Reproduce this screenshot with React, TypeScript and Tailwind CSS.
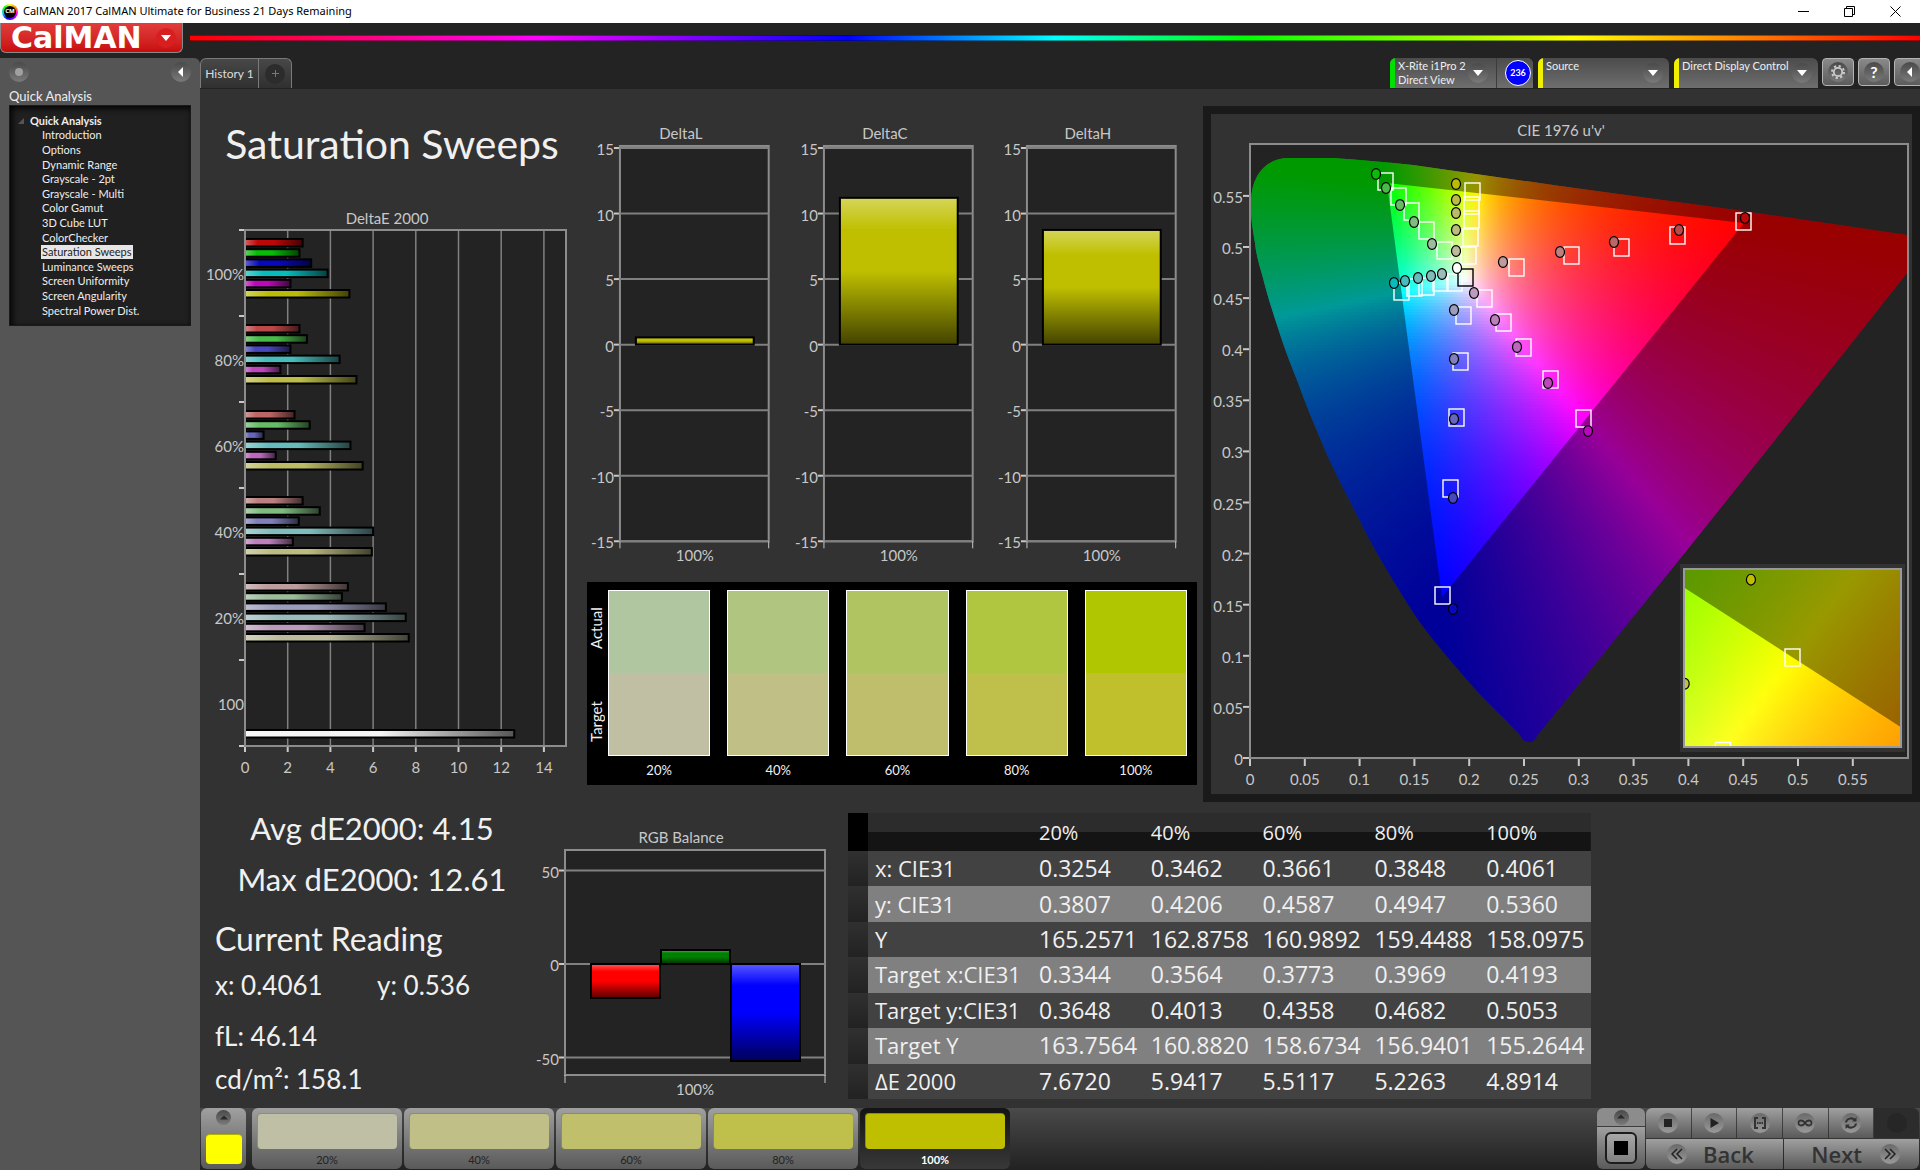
import type { ReactNode } from 'react'

const HUES = ['R', 'G', 'B', 'C', 'M', 'Y'] as const
type Hue = (typeof HUES)[number]

const HUE_MASK: Record<Hue, [number, number, number]> = {
    R: [1, 0, 0], G: [0, 1, 0], B: [0, 0, 1],
    C: [0, 1, 1], M: [1, 0, 1], Y: [1, 1, 0],
}

// channel value of the "off" primaries at 100, 80, 60, 40 and 20% saturation
const LOW = [8, 72, 102, 128, 156]
const HIGH = 188

function hueColor(hue: Hue, level: number) {
    const [r, g, b] = HUE_MASK[hue].map(on => (on ? HIGH : LOW[level]))
    return `rgb(${r},${g},${b})`
}

const TREE = [
    'Introduction', 'Options', 'Dynamic Range', 'Grayscale - 2pt', 'Grayscale - Multi',
    'Color Gamut', '3D Cube LUT', 'ColorChecker', 'Saturation Sweeps', 'Luminance Sweeps',
    'Screen Uniformity', 'Screen Angularity', 'Spectral Power Dist.',
]

const DELTA_E = [
    { label: '100%', values: [2.7, 2.55, 3.1, 3.87, 2.13, 4.89] },
    { label: '80%', values: [2.55, 2.9, 2.13, 4.43, 1.66, 5.22] },
    { label: '60%', values: [2.32, 3.03, 0.87, 4.94, 1.44, 5.51] },
    { label: '40%', values: [2.7, 3.5, 2.52, 6.0, 2.24, 5.94] },
    { label: '20%', values: [4.82, 4.54, 6.6, 7.53, 5.6, 7.67] },
    { label: '100', values: [] },
]

const SWATCHES = [
    { label: '20%', actual: '#afc6a0', target: '#c0bea3' },
    { label: '40%', actual: '#b0c580', target: '#c0bf86' },
    { label: '60%', actual: '#b0c562', target: '#bfbe6c' },
    { label: '80%', actual: '#b0c640', target: '#bfbf4b' },
    { label: '100%', actual: '#b0c600', target: '#c0c02c' },
]

const LEVELS = [
    { label: '20%', color: '#bfbfa5' },
    { label: '40%', color: '#bfbf87' },
    { label: '60%', color: '#bfbf6c' },
    { label: '80%', color: '#bfbf4b' },
    { label: '100%', color: '#bfbf00' },
]

const ROWS = [
    ['x: CIE31', '0.3254', '0.3462', '0.3661', '0.3848', '0.4061'],
    ['y: CIE31', '0.3807', '0.4206', '0.4587', '0.4947', '0.5360'],
    ['Y', '165.2571', '162.8758', '160.9892', '159.4488', '158.0975'],
    ['Target x:CIE31', '0.3344', '0.3564', '0.3773', '0.3969', '0.4193'],
    ['Target y:CIE31', '0.3648', '0.4013', '0.4358', '0.4682', '0.5053'],
    ['Target Y', '163.7564', '160.8820', '158.6734', '156.9401', '155.2644'],
    ['ΔE 2000', '7.6720', '5.9417', '5.5117', '5.2263', '4.8914'],
]

// plot positions, 100% saturation first
const TARGETS: Record<Hue, number[][]> = {
    G: [[174, 67], [187, 82], [200, 97], [215, 116], [233, 136]],
    Y: [[261, 77], [260, 91], [260, 105], [259, 123], [257, 141]],
    C: [[190, 177], [203, 173], [215, 172], [229, 168], [243, 168]],
    B: [[231, 481], [239, 374], [245, 303], [249, 247], [252, 201]],
    M: [[372, 304], [339, 265], [312, 233], [292, 208], [273, 184]],
    R: [[532, 107], [466, 121], [410, 133], [360, 141], [305, 153]],
}

const READINGS: Record<Hue, number[][]> = {
    G: [[165, 60], [175, 74], [189, 91], [203, 108], [221, 130]],
    Y: [[245, 70], [245, 86], [245, 99], [245, 116], [245, 137]],
    C: [[183, 169], [194, 167], [207, 164], [220, 162], [231, 160]],
    B: [[242, 495], [242, 384], [243, 305], [243, 245], [243, 196]],
    M: [[377, 317], [337, 269], [306, 233], [284, 206], [263, 179]],
    R: [[534, 104], [468, 116], [403, 128], [349, 138], [292, 148]],
}

/* ---------- colour maths ---------- */

// xy chromaticity to display RGB, brightest channel at full
function xyToRgb(x: number, y: number) {
    const yy = Math.max(y, 0.001)
    const X = x / yy
    const Z = (1 - x - yy) / yy
    const rgb = [
        3.2406 * X - 1.5372 - 0.4986 * Z,
        -0.9689 * X + 1.8758 + 0.0415 * Z,
        0.0557 * X - 0.204 + 1.057 * Z,
    ].map(c => Math.max(c, 0))
    const top = Math.max(...rgb, 0.0001)
    return `rgb(${rgb.map(c => Math.round((c / top) * 255)).join(',')})`
}

function uvToRgb(u: number, v: number) {
    const d = 6 * u - 16 * v + 12
    return xyToRgb((9 * u) / d, (4 * v) / d)
}

type FieldProps = {
    id: string
    x: number
    y: number
    width: number
    height: number
    color: (px: number, py: number) => string
}

// fills a box with thin strips, each one a horizontal gradient
function ColorField({ id, x, y, width, height, color }: FieldProps) {
    const strip = 3
    const steps = Math.ceil(width / 12)
    const rows = Array.from({ length: Math.ceil(height / strip) }, (_, i) => y + i * strip)
    return (
        <>
            {rows.map((top, i) => (
                <g key={top}>
                    <linearGradient id={`${id}${i}`} gradientUnits="userSpaceOnUse" x1={x} x2={x + width} y1={0} y2={0}>
                        {Array.from({ length: steps + 1 }, (_, s) => (
                            <stop key={s} offset={s / steps} stopColor={color(x + (width * s) / steps, top + strip / 2)} />
                        ))}
                    </linearGradient>
                    <rect x={x} y={top} width={width} height={strip} fill={`url(#${id}${i})`} shapeRendering="crispEdges" />
                </g>
            ))}
        </>
    )
}

/* ---------- charts ---------- */

const AXIS = '#8c8c8c'
const GRID = '#808080'
const TICK = '#c8c8c8'

function Label({ x, y, anchor = 'middle', children }: {
    x: number, y: number, anchor?: 'start' | 'middle' | 'end', children: ReactNode
}) {
    return (
        <text x={x} y={y} textAnchor={anchor} dominantBaseline="central" fontSize={15} fill="#c8c8c8">
            {children}
        </text>
    )
}

function ShadeDefs({ id }: { id: string }) {
    const stops = (
        <>
            <stop offset="0" stopColor="#fff" stopOpacity="0.35" />
            <stop offset="0.22" stopColor="#fff" stopOpacity="0" />
            <stop offset="0.5" stopColor="#000" stopOpacity="0" />
            <stop offset="1" stopColor="#000" stopOpacity="0.65" />
        </>
    )
    return (
        <defs>
            <linearGradient id={`${id}-h`}>{stops}</linearGradient>
            <linearGradient id={`${id}-v`} x1="0" y1="0" x2="0" y2="1">{stops}</linearGradient>
        </defs>
    )
}

function Bar({ x, y, w, h, color, shade }: { x: number, y: number, w: number, h: number, color: string, shade: string }) {
    return (
        <>
            <rect x={x} y={y} width={w} height={h} fill={color} />
            <rect x={x} y={y} width={w} height={h} fill={`url(#${shade})`} stroke="#000" strokeWidth="2" />
        </>
    )
}

function DeltaEChart() {
    const sx = (v: number) => 45 + v * 21.35
    const band = 86
    return (
        <svg viewBox="0 0 378 575" className="block w-full" role="img" aria-label="DeltaE 2000">
            <ShadeDefs id="de" />
            <Label x={187} y={13}>DeltaE 2000</Label>
            <rect x={45} y={25} width={321} height={516} fill="#232323" />
            {[2, 4, 6, 8, 10, 12, 14].map(v => (
                <line key={v} x1={sx(v)} x2={sx(v)} y1={25} y2={541} stroke={GRID} strokeWidth="1.5" />
            ))}
            {DELTA_E.map((group, i) => (
                <g key={group.label}>
                    <Label x={44} y={69 + i * band} anchor="end">{group.label}</Label>
                    {group.values.map((v, k) => (
                        <Bar key={k} x={45} y={34 + i * band + k * 10.2} w={sx(v) - 45} h={7.5} color={hueColor(HUES[k], i)} shade="de-h" />
                    ))}
                </g>
            ))}
            <Bar x={45} y={525} w={sx(12.61) - 45} h={7.5} color="#f4f4f4" shade="de-h" />
            <rect x={45} y={25} width={321} height={516} fill="none" stroke={AXIS} strokeWidth="2" />
            {[0, 1, 2, 3, 4, 5, 6].map(i => (
                <line key={i} x1={39} x2={44} y1={25 + i * band} y2={25 + i * band} stroke={TICK} strokeWidth="2" />
            ))}
            {[0, 2, 4, 6, 8, 10, 12, 14].map(v => (
                <g key={v}>
                    <line x1={sx(v)} x2={sx(v)} y1={542} y2={547} stroke={TICK} strokeWidth="2" />
                    <Label x={sx(v)} y={562}>{v}</Label>
                </g>
            ))}
        </svg>
    )
}

function DeltaChart({ title, value }: { title: string, value: number }) {
    const sy = (v: number) => 225 - v * 13.13
    return (
        <svg viewBox="0 0 204 450" className="block min-w-0 flex-1" role="img" aria-label={title}>
            <ShadeDefs id={title} />
            <Label x={99} y={13}>{title}</Label>
            <rect x={38} y={26} width={149} height={396} fill="#232323" stroke={AXIS} strokeWidth="2" />
            {[15, 10, 5, 0, -5, -10, -15].map(v => (
                <g key={v}>
                    <line x1={38} x2={187} y1={sy(v)} y2={sy(v)} stroke={GRID} strokeWidth="2" />
                    <line x1={32} x2={37} y1={sy(v)} y2={sy(v)} stroke={TICK} strokeWidth="2" />
                    <Label x={32} y={sy(v) + 1} anchor="end">{v}</Label>
                </g>
            ))}
            {[38, 187].map(x => (
                <line key={x} x1={x} x2={x} y1={422} y2={429} stroke={TICK} strokeWidth="1" />
            ))}
            <Bar x={54} y={sy(value)} w={118} h={sy(0) - sy(value)} color="#bfbf00" shade={`${title}-v`} />
            <Label x={113} y={436}>100%</Label>
        </svg>
    )
}

function RgbBalance() {
    const sy = (v: number) => 144 - v * 1.87
    return (
        <svg viewBox="-10 0 318 285" className="block w-full" role="img" aria-label="RGB Balance">
            <ShadeDefs id="rgb" />
            <Label x={141} y={17}>RGB Balance</Label>
            <rect x={25} y={30} width={260} height={225} fill="#232323" stroke={AXIS} strokeWidth="2" />
            {[50, 0, -50].map(v => (
                <g key={v}>
                    <line x1={25} x2={285} y1={sy(v)} y2={sy(v)} stroke={GRID} strokeWidth="2" />
                    <line x1={19} x2={24} y1={sy(v)} y2={sy(v)} stroke={TICK} strokeWidth="2" />
                    <Label x={19} y={sy(v) + 1} anchor="end">{v}</Label>
                </g>
            ))}
            <line x1={25} x2={25} y1={255} y2={263} stroke={TICK} />
            <line x1={285} x2={285} y1={255} y2={263} stroke={TICK} />
            <Bar x={51} y={144} w={69} h={34} color="#ff0000" shade="rgb-v" />
            <Bar x={121} y={130} w={69} h={14} color="#008000" shade="rgb-v" />
            <Bar x={191} y={144} w={69} h={97} color="#0000ff" shade="rgb-v" />
            <Label x={155} y={269}>100%</Label>
        </svg>
    )
}

function Target({ x, y, color = '#fff' }: { x: number, y: number, color?: string }) {
    return <rect x={x - 7} y={y - 8} width={15} height={17} fill="none" stroke={color} strokeWidth="1.4" />
}

function Reading({ x, y, color }: { x: number, y: number, color: string }) {
    return <ellipse cx={x} cy={y} rx="4.5" ry="5.4" fill={color} stroke="#000" strokeWidth="1.2" />
}

const LOCUS =
    'M318 628 C313 628 311 624 308 620 C292 602 275 588 258 568 C234 540 210 513 193 484 ' +
    'C177 458 161 432 147 403 C134 377 124 359 114 336 C104 312 94 289 86 266 ' +
    'C78 246 72 230 67 214 C61 196 56 180 52 164 C48 150 45 140 44 129 C41 112 39 98 40 86 ' +
    'C41 62 54 44 78 44 L122 44 C150 46 176 48 202 51 L349 72 L532 97 L696 121 L696 159 ' +
    'L556 336 L476 436 L326 622 C324 626 322 628 318 628 Z'
const TRIANGLE = 'M176 69 L533 109 L231 483 Z'

function CieChart() {
    const sx = (u: number) => 39 + u * 1096
    const sy = (v: number) => 644 - v * 1022
    // the inset is an xy view centred on the 100% yellow target
    const ix = (x: number) => 581 + (x - 0.4193) * 3110
    const iy = (y: number) => 543 - (y - 0.5053) * 2520
    const ticks = Array.from({ length: 12 }, (_, i) => i * 0.05)
    const text = (v: number) => String(Number(v.toFixed(2)))
    return (
        <svg viewBox="0 0 701 680" className="block w-full" role="img" aria-label="CIE 1976 u'v'">
            <defs>
                <clipPath id="locus"><path d={LOCUS} /></clipPath>
                <clipPath id="inset"><rect x={473} y={455} width={217} height={178} /></clipPath>
            </defs>
            <Label x={350} y={16}>CIE 1976 u'v'</Label>
            <rect x={39} y={30} width={658} height={614} fill="#232323" />
            <g clipPath="url(#locus)">
                <ColorField
                    id="uv" x={39} y={42} width={658} height={588}
                    color={(px, py) => uvToRgb((px - 39) / 1096, (644 - py) / 1022)}
                />
                <path d={`M0 0 H701 V680 H0 Z ${TRIANGLE}`} fill="#000" fillOpacity="0.4" fillRule="evenodd" />
            </g>
            {HUES.map(h => TARGETS[h].map(([x, y]) => <Target key={`${x}-${y}`} x={x} y={y} />))}
            <Target x={254} y={163} color="#000" />
            {HUES.map(h => READINGS[h].map(([x, y], i) => <Reading key={`${x}-${y}`} x={x} y={y} color={hueColor(h, i)} />))}
            <Reading x={246} y={154} color="#fff" />
            <rect x={39} y={30} width={658} height={614} fill="none" stroke={AXIS} strokeWidth="2" />

            {ticks.map(v => (
                <g key={v}>
                    <line x1={sx(v)} x2={sx(v)} y1={645} y2={652} stroke={TICK} strokeWidth="2" />
                    <line x1={32} x2={38} y1={sy(v)} y2={sy(v)} stroke={TICK} strokeWidth="2" />
                    <Label x={sx(v)} y={665}>{text(v)}</Label>
                    <Label x={32} y={sy(v) + 1} anchor="end">{text(v)}</Label>
                </g>
            ))}

            <rect x={469} y={450} width={225} height={188} fill="#323232" />
            <g clipPath="url(#inset)">
                <ColorField
                    id="xy" x={473} y={455} width={217} height={178}
                    color={(px, py) => xyToRgb(0.4193 + (px - 581) / 3110, 0.5053 - (py - 543) / 2520)}
                />
                {/* everything above the red-green edge is out of gamut */}
                <path
                    d={`M${ix(0.3)} ${iy(0.6)} L${ix(0.64)} ${iy(0.33)} V400 H${ix(0.3)} Z`}
                    fill="#000" fillOpacity="0.4"
                />
                <Target x={ix(0.4193)} y={iy(0.5053)} />
                <Target x={ix(0.3969)} y={iy(0.4682)} />
                <Reading x={ix(0.4061)} y={iy(0.536)} color="#bfbf00" />
                <Reading x={ix(0.3848)} y={iy(0.4947)} color="#bfbf4b" />
            </g>
            <rect x={473} y={455} width={217} height={178} fill="none" stroke="#999" strokeWidth="2" />
        </svg>
    )
}

/* ---------- chrome ---------- */

function Knob({ children, small = false }: { children?: ReactNode, small?: boolean }) {
    return (
        <span
            className={`flex shrink-0 items-center justify-center rounded-full bg-linear-to-b from-[#4a4a4a] to-[#7a7a7a] ${small ? 'h-[15px] w-[15px]' : 'h-5 w-5'}`}
        >
            {children}
        </span>
    )
}

function Caret({ dir }: { dir: 'down' | 'left' | 'up' }) {
    const d = { down: 'M0 2 H10 L5 8 Z', left: 'M7 0 V10 L2 5 Z', up: 'M0 7 H10 L5 2 Z' }[dir]
    return (
        <svg viewBox="0 0 10 10" className={dir === 'up' ? 'h-2 w-2 fill-[#2a2a2a]' : 'h-2.5 w-2.5 fill-white'}>
            <path d={d} />
        </svg>
    )
}

function TitleBar() {
    return (
        <div className="flex h-[23px] items-center bg-white pl-0.5 font-['Noto_Sans',sans-serif] text-[11px] text-black">
            <span className="flex h-4 w-4 items-center justify-center rounded-full bg-[conic-gradient(#ff0,#f80,#f0f,#80f,#00f,#0cf,#0f0,#ff0)]">
                <span className="flex h-3 w-3 items-center justify-center rounded-full bg-black text-[6px] font-bold text-white">CM</span>
            </span>
            <span className="ml-[5px]">CalMAN 2017 CalMAN Ultimate for Business 21 Days Remaining</span>
            <div className="ml-auto flex h-full items-center pr-0.5">
                <button aria-label="Minimize" className="flex w-[46px] justify-center">
                    <svg viewBox="0 0 11 11" className="h-[11px] w-[11px] stroke-black"><path d="M0 5.5 H11" /></svg>
                </button>
                <button aria-label="Restore" className="flex w-[46px] justify-center">
                    <svg viewBox="0 0 11 11" className="h-[11px] w-[11px] fill-none stroke-black">
                        <path d="M0.5 2.5 H8.5 V10.5 H0.5 Z M2.5 2.5 V0.5 H10.5 V8.5 H8.5" />
                    </svg>
                </button>
                <button aria-label="Close" className="flex w-[46px] justify-center">
                    <svg viewBox="0 0 11 11" className="h-[11px] w-[11px] stroke-black"><path d="M0.5 0.5 L10.5 10.5 M10.5 0.5 L0.5 10.5" /></svg>
                </button>
            </div>
        </div>
    )
}

function Brand() {
    return (
        <div className="flex h-[35px] items-start">
            <button className="flex h-[30px] w-[183px] items-center justify-between rounded-b-md border border-t-0 border-[#8a8a8a] bg-linear-to-b from-[#e23c3c] to-[#c80a0a] pr-1.5 pl-2.5">
                <span className="font-['DejaVu_Sans',sans-serif] text-[30px] leading-7 font-bold text-white">CalMAN</span>
                <span className="flex h-5 w-5 items-center justify-center rounded-full bg-[#d81f1f]"><Caret dir="down" /></span>
            </button>
            <div className="mt-3 ml-[7px] h-1.5 flex-1 border-y border-black/40 bg-[linear-gradient(to_right,#f00,#f0f_20%,#00f_38%,#0ff_50%,#0f0_61%,#ff0_80%,#f00)]" />
        </div>
    )
}

function Sidebar() {
    return (
        <aside className="w-[200px] shrink-0 rounded-tr-md bg-[#555] px-[9px] pt-1">
            <div className="flex justify-between">
                <button aria-label="Pin"><Knob><span className="h-2 w-2 rounded-full bg-[#a0a0a0]" /></Knob></button>
                <button aria-label="Collapse"><Knob><Caret dir="left" /></Knob></button>
            </div>
            <h2 className="mt-1 h-[19px] text-[13px] leading-[21px] text-[#eee]">Quick Analysis</h2>
            <nav className="h-[221px] border border-[#1a1a1a] bg-[#202020] pt-2 text-[11px] text-[#eee] shadow-[inset_2px_2px_6px_#000]">
                <p className="flex h-[14px] items-center gap-1.5 pl-2 font-bold">
                    <svg viewBox="0 0 6 6" className="h-1.5 w-1.5 fill-[#555]"><path d="M6 0 V6 H0 Z" /></svg>
                    Quick Analysis
                </p>
                <ul className="flex h-[190px] flex-col pl-[31px]">
                    {TREE.map(item => (
                        <li key={item} className="flex flex-1 items-center">
                            <a href="#" className={item === 'Saturation Sweeps' ? 'bg-[#e6e6e6] px-px leading-[14px] text-[#222]' : 'px-px leading-[14px]'}>
                                {item}
                            </a>
                        </li>
                    ))}
                </ul>
            </nav>
        </aside>
    )
}

function SourceMenu({ lines, bar, className }: { lines: string[], bar: string, className: string }) {
    return (
        <button aria-haspopup="menu" className={`flex h-full items-center overflow-hidden bg-linear-to-b from-[#4c4c4c] to-[#6e6e6e] pr-1.5 text-left ${className}`}>
            <span className={`h-full w-[5px] ${bar}`} />
            <span className="ml-[3px] flex-1 self-start pt-px text-[11px] leading-[14px] text-[#eee]">
                {lines.map(l => <span key={l} className="block whitespace-nowrap">{l}</span>)}
            </span>
            <Knob><Caret dir="down" /></Knob>
        </button>
    )
}

function TabRow() {
    const square = 'flex h-7 w-8 items-center justify-center rounded border border-[#b4b4b4] bg-linear-to-b from-[#8a8a8a] to-[#5c5c5c]'
    return (
        <div className="flex h-[30px] items-stretch justify-between">
            <div className="flex overflow-hidden rounded-t-md border border-b-0 border-[#7a7a7a] bg-linear-to-b from-[#484848] to-[#303030]">
                <button className="w-[58px] border-r border-[#7a7a7a] text-[12px] text-[#ddd]">History 1</button>
                <button aria-label="Add tab" className="flex w-8 items-center justify-center">
                    <span className="flex h-5 w-5 items-center justify-center rounded-full bg-[#2c2c2c]">
                        <svg viewBox="0 0 7 7" className="h-[7px] w-[7px] stroke-[#777]"><path d="M0 3.5 H7 M3.5 0 V7" /></svg>
                    </span>
                </button>
            </div>
            <div className="flex">
                <div className="flex w-[143px] overflow-hidden rounded-t-md bg-[#666]">
                    <SourceMenu lines={['X-Rite i1Pro 2', 'Direct View']} bar="bg-[#00e000]" className="w-[107px] border-r border-[#3c3c3c] pr-2" />
                    <div className="flex flex-1 items-center justify-end bg-linear-to-b from-[#4c4c4c] to-[#6e6e6e] pr-0.5">
                        <span className="flex h-[26px] w-[26px] items-center justify-center rounded-full border border-white bg-[#0000ff] text-[9px] font-bold text-white">236</span>
                    </div>
                </div>
                <SourceMenu lines={['Source']} bar="bg-[#f0f000]" className="ml-[5px] w-[131px] rounded-t-md" />
                <SourceMenu lines={['Direct Display Control']} bar="bg-[#f0f000]" className="ml-[5px] w-[144px] rounded-t-md" />
                <div className="ml-1 flex w-[98px] gap-1 overflow-hidden">
                    <button aria-label="Settings" className={`${square} shrink-0`}>
                        <Knob>
                            <svg viewBox="0 0 16 16" className="h-4 w-4 fill-none stroke-[#ccc]">
                                <circle cx="8" cy="8" r="4.2" strokeWidth="1.8" />
                                <circle cx="8" cy="8" r="6" strokeWidth="2" strokeDasharray="2.2 2.5" />
                            </svg>
                        </Knob>
                    </button>
                    <button aria-label="Help" className={`${square} shrink-0 text-base font-bold text-white`}><Knob>?</Knob></button>
                    <button aria-label="Hide" className={`${square} shrink-0`}><Knob><Caret dir="left" /></Knob></button>
                </div>
            </div>
        </div>
    )
}

function SwatchPanel() {
    return (
        <div className="mr-1.5 ml-[9px] flex h-[203px] bg-black pr-2.5 text-[13px] text-[#f0f0f0]">
            <div className="flex h-[186px] w-[21px] flex-col pr-[3px] text-[15px] leading-[18px]">
                <span className="flex flex-1 rotate-180 items-center justify-center [writing-mode:vertical-rl]">Actual</span>
                <span className="flex flex-1 rotate-180 items-center justify-center [writing-mode:vertical-rl]">Target</span>
            </div>
            <div className="grid flex-1 grid-cols-5 gap-[17px] pt-2">
                {SWATCHES.map(s => (
                    <div key={s.label} className="text-center">
                        <div className="flex h-[166px] flex-col border border-white">
                            <div className="flex-1" style={{ background: s.actual }} />
                            <div className="flex-1" style={{ background: s.target }} />
                        </div>
                        <p className="mt-1 leading-5">{s.label}</p>
                    </div>
                ))}
            </div>
        </div>
    )
}

function Readings() {
    return (
        <div className="w-[330px] shrink-0 pt-px pl-[15px] text-[#f0f0f0]">
            <div className="w-[314px] text-center text-[31px] leading-[51px]">
                <p>Avg dE2000: 4.15</p>
                <p>Max dE2000: 12.61</p>
            </div>
            <h2 className="mt-2 text-[32px] leading-[51px]">Current Reading</h2>
            <div className="text-[26px] leading-[43px]">
                <p className="flex"><span className="w-[162px]">x: 0.4061</span><span>y: 0.536</span></p>
                <p className="mt-2">fL: 46.14</p>
                <p>cd/m²: 158.1</p>
            </div>
        </div>
    )
}

function ResultTable() {
    return (
        <table className="mt-[11px] h-[286px] w-[743px] table-fixed self-start text-left font-['Open_Sans',sans-serif] text-[22px] leading-[35px] text-[#f0f0f0]">
            <thead>
                <tr className="h-[38px] bg-[linear-gradient(#2c2c2c_50%,#141414_50%)] text-[20px]">
                    <td className="w-5 bg-black" />
                    <th className="w-[164px]" aria-label="Measure" />
                    {SWATCHES.map(s => <th key={s.label} scope="col" className="pl-[7px] font-medium">{s.label}</th>)}
                </tr>
            </thead>
            <tbody>
                {ROWS.map(([name, ...cells], i) => (
                    <tr key={name} className={i % 2 ? 'bg-[#808080]' : 'bg-[#424242]'}>
                        <td className="bg-linear-to-b from-[#303030] to-[#222]" />
                        <th scope="row" className="pl-[7px] font-normal whitespace-nowrap">{name}</th>
                        {cells.map((c, k) => <td key={k} className="pl-[7px] text-[23px]">{c}</td>)}
                    </tr>
                ))}
            </tbody>
        </table>
    )
}

const FACE = 'bg-linear-to-b from-[#a0a0a0] to-[#5a5a5a]'

const TRANSPORT: { name: string, icon: ReactNode }[] = [
    { name: 'Stop', icon: <path d="M4 4 H12 V12 H4 Z" fill="#222" /> },
    { name: 'Play', icon: <path d="M4.5 3 V13 L13 8 Z" fill="#222" /> },
    {
        name: 'Range',
        icon: (
            <g fill="#333">
                <path d="M2 2 H6 V4 H4 V12 H6 V14 H2 Z M14 2 H10 V4 H12 V12 H10 V14 H14 Z" />
                <path d="M5 7 H6.5 V9 H5 Z M7.2 7 H8.8 V9 H7.2 Z M9.5 7 H11 V9 H9.5 Z" />
            </g>
        ),
    },
    { name: 'Loop', icon: <path d="M8 8 C6 4.800 1.500 4.500 1.500 8 S6 11.200 8 8 C10 4.800 14.500 4.500 14.500 8 S10 11.200 8 8 Z" fill="none" stroke="#333" strokeWidth="1.8" /> },
    {
        name: 'Refresh',
        icon: (
            <g fill="none" stroke="#333" strokeWidth="2">
                <path d="M3 7.500 C3.500 3.500 9 2 12 5" />
                <path d="M13 8.500 C12.500 12.500 7 14 4 11" />
                <path d="M13.500 2 V6.500 H9 Z M2.500 14 V9.500 H7 Z" fill="#333" stroke="none" />
            </g>
        ),
    },
]

function Round({ children }: { children?: ReactNode }) {
    return (
        <span className="flex h-5 w-5 items-center justify-center rounded-full bg-linear-to-b from-[#6a6a6a] to-[#9a9a9a]">{children}</span>
    )
}

function BottomBar() {
    return (
        <footer className="flex h-[62px] items-stretch justify-between bg-linear-to-b from-[#4a4a4a] to-[#222] pb-px pl-px">
            <div className="flex">
                <button aria-label="Current pattern" className={`flex w-[45px] flex-col items-center rounded-md pt-0.5 ${FACE}`}>
                    <Knob small><Caret dir="up" /></Knob>
                    <span className="mt-[9px] h-[30px] w-9 rounded-sm border-t border-[#b0b000] bg-[#ffff00]" />
                </button>
                <div className="ml-1.5 flex gap-0.5">
                    {LEVELS.map((l, i) => {
                        const active = i === LEVELS.length - 1
                        return (
                            <button
                                key={l.label}
                                className={`w-[150px] rounded-md px-[5px] pt-[5px] text-[11px] ${active ? 'bg-linear-to-b from-[#141414] to-[#383838] font-bold text-white' : `text-[#222] ${FACE}`}`}
                            >
                                <span className="block h-9 rounded-sm border-t border-l border-black/25" style={{ background: l.color }} />
                                <span className="block leading-[22px]">{l.label}</span>
                            </button>
                        )
                    })}
                </div>
            </div>
            <div className="flex gap-px pr-px">
                <div className="flex w-12 flex-col gap-px">
                    <button aria-label="More" className="flex h-[18px] items-center justify-center rounded-t-md bg-[#8c8c8c]"><Knob small><Caret dir="up" /></Knob></button>
                    <button aria-label="Stop all" className={`flex flex-1 items-center justify-center rounded-b-md ${FACE}`}>
                        <span className="flex h-8 w-8 items-center justify-center rounded-md border-2 border-[#1c1c1c] bg-linear-to-b from-[#a8a8a8] to-[#808080]">
                            <span className="h-[14px] w-[14px] bg-black" />
                        </span>
                    </button>
                </div>
                <div className="flex w-[273px] flex-col gap-px">
                    <div className="flex flex-1 gap-px overflow-hidden rounded-t-md">
                        {TRANSPORT.map(t => (
                            <button key={t.name} aria-label={t.name} className={`flex flex-1 items-center justify-center ${FACE}`}>
                                <Round><svg viewBox="0 0 16 16" className="h-4 w-4">{t.icon}</svg></Round>
                            </button>
                        ))}
                        <button aria-label="Record" className="flex flex-1 items-center justify-center bg-[#2c2c2c]">
                            <span className="h-5 w-5 rounded-full bg-[#262626]" />
                        </button>
                    </div>
                    <div className="flex flex-1 gap-px overflow-hidden rounded-b-md font-['Open_Sans',sans-serif] text-[22px] leading-7 font-semibold text-[#333]">
                        <button className={`flex flex-1 items-center gap-4 pl-[21px] ${FACE}`}>
                            <Round>
                                <svg viewBox="0 0 12 12" className="h-3 w-3 fill-none stroke-[#222] stroke-[1.5]"><path d="M6 1 L1 6 L6 11 M11 1 L6 6 L11 11" /></svg>
                            </Round>
                            Back
                        </button>
                        <button className={`flex flex-1 items-center justify-end gap-[18px] pr-[19px] ${FACE}`}>
                            Next
                            <Round>
                                <svg viewBox="0 0 12 12" className="h-3 w-3 fill-none stroke-[#222] stroke-[1.5]"><path d="M1 1 L6 6 L1 11 M6 1 L11 6 L6 11" /></svg>
                            </Round>
                        </button>
                    </div>
                </div>
            </div>
        </footer>
    )
}

export default function App() {
    return (
        <div className="flex min-h-screen flex-col bg-[#232323] font-[Lato,sans-serif]">
            <TitleBar />
            <Brand />
            <div className="flex flex-1">
                <Sidebar />
                <div className="flex min-w-0 flex-1 flex-col">
                    <TabRow />
                    <main className="flex-1 border-t border-[#222] bg-[#323232]">
                        <div className="flex">
                            {/* DeltaE column */}
                            <section className="w-[378px] shrink-0 pt-[27px]">
                                <h1 className="pl-[6px] text-center text-[41px] leading-[56px] text-[#f0f0f0]">Saturation Sweeps</h1>
                                <div className="pt-[33px]"><DeltaEChart /></div>
                            </section>

                            {/* Component errors and patches */}
                            <section className="w-[625px] shrink-0 pt-[31px]">
                                <div className="flex pl-1 pr-2.5">
                                    <DeltaChart title="DeltaL" value={0.55} />
                                    <DeltaChart title="DeltaC" value={11.2} />
                                    <DeltaChart title="DeltaH" value={8.75} />
                                </div>
                                <div className="pt-[13px]"><SwatchPanel /></div>
                            </section>

                            <section className="mt-[17px] min-w-0 flex-1 self-start border-8 border-[#1a1a1a]">
                                <CieChart />
                            </section>
                        </div>

                        <div className="flex">
                            <Readings />
                            <div className="w-[318px] shrink-0 pt-[18px]"><RgbBalance /></div>
                            <ResultTable />
                        </div>
                    </main>
                    <BottomBar />
                </div>
            </div>
        </div>
    )
}
